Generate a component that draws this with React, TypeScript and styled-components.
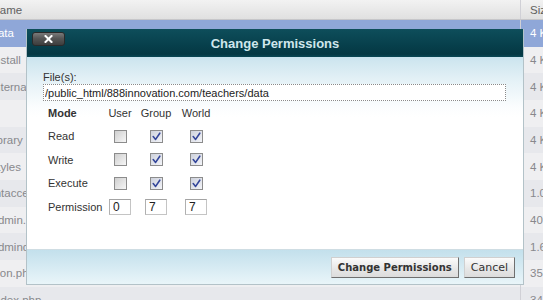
import React from "react";
import styled, { createGlobalStyle, css } from "styled-components";

const GlobalStyle = createGlobalStyle`
  html, body { margin: 0; padding: 0; }
  body {
    width: 543px;
    height: 300px;
    overflow: hidden;
    background: #e8e8eb;
    font-family: "Liberation Sans", Arial, sans-serif;
  }
`;

const Screen = styled.div`
  position: relative;
  width: 543px;
  height: 300px;
  overflow: hidden;
  background: #e8e8eb;
`;

/* ---------- background file list ---------- */

const FileList = styled.div`
  display: flex;
  flex-direction: column;
`;

const HeaderRow = styled.div`
  display: grid;
  grid-template-columns: 521px 1fr;
  height: 20px;
  box-sizing: border-box;
  background: linear-gradient(#f2f2f2, #e0e0e0);
  border-bottom: 1px solid #c6c6c9;
  font-size: 11.5px;
  color: #606060;
`;

const Row = styled.div<{ $selected?: boolean; $alt?: boolean }>`
  display: grid;
  grid-template-columns: 521px 1fr;
  height: 26.67px;
  font-size: 11.5px;
  color: #88888c;
  background: ${(p) => (p.$alt ? "#e7e8ec" : "#efeff1")};
  ${(p) =>
    p.$selected &&
    css`
      background: #8fa7d8;
      color: #ffffff;
    `}
`;

const NameCell = styled.div`
  display: flex;
  align-items: center;
  overflow: hidden;
  white-space: nowrap;
  border-right: 1px solid #d0d0d6;
`;

const NameText = styled.span`
  margin-left: -8.5px;
`;

const SizeCell = styled.div`
  display: flex;
  align-items: center;
  padding-left: 9px;
  white-space: nowrap;
  overflow: hidden;
`;

/* ---------- dialog ---------- */

const Dialog = styled.div`
  position: absolute;
  left: 26px;
  top: 29px;
  width: 498px;
  height: 256px;
  box-sizing: border-box;
  border: 1px solid #b3c2c8;
  border-top: none;
  display: flex;
  flex-direction: column;
  background: #ffffff;
`;

const TitleBar = styled.div`
  height: 28px;
  box-sizing: border-box;
  display: grid;
  grid-template-columns: 1fr auto 1fr;
  align-items: center;
  padding: 0 5px;
  background: linear-gradient(#0e4e5b 0%, #073f4b 60%, #053843 90%, #0a4855 100%);
`;

const CloseButton = styled.button`
  justify-self: start;
  align-self: start;
  margin-top: 3px;
  width: 33px;
  height: 14px;
  padding: 0;
  box-sizing: border-box;
  border: 1px solid #2a2a2a;
  border-radius: 3px;
  background: linear-gradient(#7a7a7a 0%, #565656 45%, #3d3d3d 100%);
  display: flex;
  align-items: center;
  justify-content: center;
  cursor: pointer;
`;

const Title = styled.div`
  font-family: "Liberation Sans", Arial, sans-serif;
  font-size: 13px;
  font-weight: bold;
  color: #cfe7ec;
  white-space: nowrap;
`;

const Body = styled.div`
  flex: 1;
  display: flex;
  flex-direction: column;
  padding: 14px 17px 0 16px;
  background: linear-gradient(#cbe4ee 0px, #e6f2f7 25px, #fbfdfe 50px, #ffffff 60px);
`;

const FieldLabel = styled.div`
  font-size: 11px;
  line-height: 13px;
  color: #333333;
`;

const PathInput = styled.input`
  width: 100%;
  height: 17px;
  box-sizing: border-box;
  margin: 0;
  padding: 0 1px;
  border: 1px dotted #8a8a8a;
  background: #ffffff;
  font-family: "Liberation Sans", Arial, sans-serif;
  font-size: 11px;
  color: #222222;
  outline: none;
`;

const PermGrid = styled.div`
  display: grid;
  grid-template-columns: 56px 32px 40px 40px;
  grid-auto-rows: 23.5px;
  align-items: center;
  justify-items: center;
  margin-left: 5px;
  font-size: 11px;
  color: #333333;
`;

const RowLabel = styled.div<{ $bold?: boolean }>`
  justify-self: start;
  font-weight: ${(p) => (p.$bold ? "bold" : "normal")};
  white-space: nowrap;
`;

const ColHead = styled.div`
  white-space: nowrap;
`;

const Box = styled.span<{ $checked?: boolean }>`
  width: 13px;
  height: 13px;
  box-sizing: border-box;
  border: 1px solid #8c8c8c;
  display: flex;
  align-items: center;
  justify-content: center;
  background: ${(p) =>
    p.$checked
      ? "linear-gradient(135deg, #cdd1dc, #f3f4f8)"
      : "linear-gradient(135deg, #cfcfcf, #f6f6f6)"};
`;

const PermInput = styled.input`
  width: 22px;
  height: 16px;
  box-sizing: border-box;
  margin: 0;
  padding: 0 3px;
  border: 1px solid #c4c4c4;
  border-top-color: #a3a3a3;
  border-left-color: #b0b0b0;
  background: #ffffff;
  font-family: "Liberation Sans", Arial, sans-serif;
  font-size: 12px;
  color: #222222;
  outline: none;
`;

const Footer = styled.div`
  height: 35px;
  box-sizing: border-box;
  border-top: 1px solid #cfdde3;
  display: flex;
  justify-content: flex-end;
  align-items: flex-start;
  gap: 5px;
  padding: 7px 8px 0 0;
  background: linear-gradient(#c3e0ec, #e9f5f9);
`;

const Button = styled.button<{ $primary?: boolean }>`
  height: 21px;
  box-sizing: border-box;
  margin: 0;
  padding: 0 6px;
  border: 1px solid;
  border-color: #d0d0d0 #6f6f6f #6f6f6f #d0d0d0;
  background: linear-gradient(#fbfbfb, #e6e6e6 60%, #dcdcdc);
  font-family: "DejaVu Sans", Verdana, sans-serif;
  font-size: ${(p) => (p.$primary ? "10px" : "11px")};
  font-weight: ${(p) => (p.$primary ? "bold" : "normal")};
  color: #333333;
  white-space: nowrap;
  cursor: pointer;
`;

const Check = () => (
  <svg width="9" height="9" viewBox="0 0 9 9">
    <path d="M1.2 4.6 L3.6 7.4 L7.8 1.2" fill="none" stroke="#34469a" strokeWidth="1.6" strokeLinecap="round" strokeLinejoin="round" />
  </svg>
);

const Checkbox = ({ checked }: { checked?: boolean }) => (
  <Box $checked={checked} role="checkbox" aria-checked={!!checked}>
    {checked && <Check />}
  </Box>
);

const files = [
  { name: "data", size: "4 KB" },
  { name: "install", size: "4 KB" },
  { name: "internal", size: "4 KB" },
  { name: "..", size: "4 KB" },
  { name: "library", size: "4 KB" },
  { name: "styles", size: "4 KB" },
  { name: ".htaccess", size: "1.0 KB" },
  { name: "admin.php", size: "40 KB" },
  { name: "admindata.php", size: "1.6 KB" },
  { name: "json.php", size: "35 KB" },
  { name: "index.php", size: "34 KB" },
];

const perms = [
  { label: "Read", values: [false, true, true] },
  { label: "Write", values: [false, true, true] },
  { label: "Execute", values: [false, true, true] },
];

export default function App() {
  return (
    <>
      <GlobalStyle />
      <Screen>
        <FileList>
          <HeaderRow>
            <NameCell>
              <NameText>Name</NameText>
            </NameCell>
            <SizeCell>Size</SizeCell>
          </HeaderRow>
          {files.map((f, i) => (
            <Row key={f.name} $selected={i === 0} $alt={i % 2 === 0}>
              <NameCell>
                <NameText>{f.name}</NameText>
              </NameCell>
              <SizeCell>{f.size}</SizeCell>
            </Row>
          ))}
        </FileList>

        <Dialog>
          <TitleBar>
            <CloseButton aria-label="Close">
              <svg width="9" height="8" viewBox="0 0 9 8">
                <path d="M1.5 1 L7.5 7 M7.5 1 L1.5 7" stroke="#ffffff" strokeWidth="2" strokeLinecap="square" />
              </svg>
            </CloseButton>
            <Title>Change Permissions</Title>
            <span />
          </TitleBar>
          <Body>
            <FieldLabel>File(s):</FieldLabel>
            <PathInput readOnly value="/public_html/888innovation.com/teachers/data" />
            <PermGrid>
              <RowLabel $bold>Mode</RowLabel>
              <ColHead>User</ColHead>
              <ColHead>Group</ColHead>
              <ColHead>World</ColHead>
              {perms.map((p) => (
                <React.Fragment key={p.label}>
                  <RowLabel>{p.label}</RowLabel>
                  {p.values.map((v, j) => (
                    <Checkbox key={j} checked={v} />
                  ))}
                </React.Fragment>
              ))}
              <RowLabel>Permission</RowLabel>
              <PermInput readOnly value="0" />
              <PermInput readOnly value="7" />
              <PermInput readOnly value="7" />
            </PermGrid>
          </Body>
          <Footer>
            <Button $primary>Change Permissions</Button>
            <Button>Cancel</Button>
          </Footer>
        </Dialog>
      </Screen>
    </>
  );
}
